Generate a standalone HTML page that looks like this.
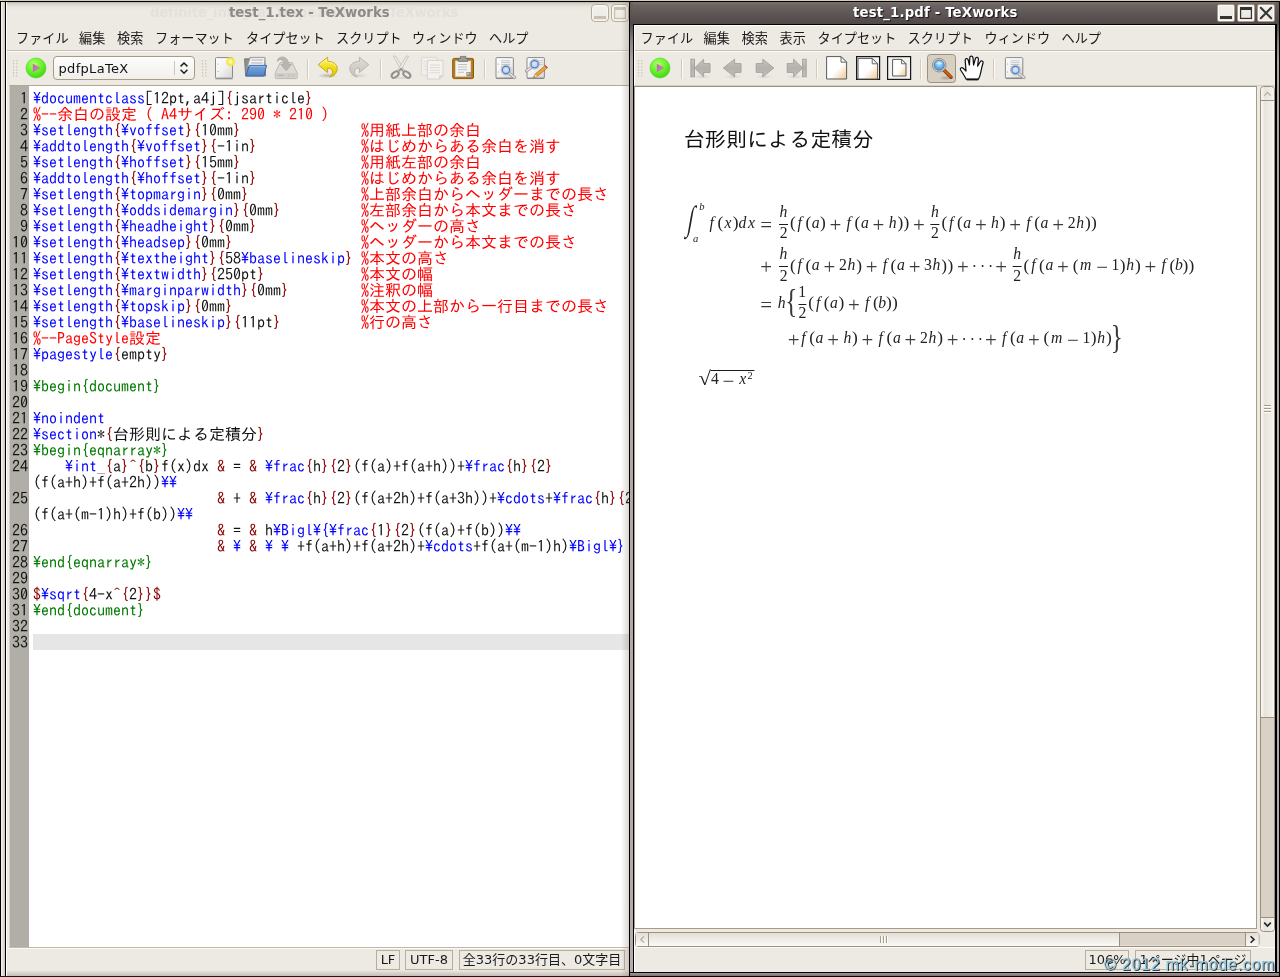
<!DOCTYPE html>
<html lang="ja"><head><meta charset="utf-8"><title>TeXworks</title>
<style>
*{box-sizing:border-box;margin:0;padding:0}
html,body{width:1280px;height:977px;overflow:hidden;background:#000}
body{position:relative;font-family:"DejaVu Sans","Noto Sans CJK JP",sans-serif;font-size:13px;color:#1a1a1a}
i{font-style:normal}
.abs,.win *{position:absolute}
.win{will-change:transform;position:absolute;top:0;height:977px;overflow:hidden}
#topstrip{position:absolute;left:0;top:0;width:1280px;height:1px;background:#d9cdb8;z-index:50}
/* ---------- left window ---------- */
#L{left:0;width:629px;background:#ede9e3}
#L .fl{left:0;top:1px;width:6px;height:976px;background:linear-gradient(90deg,#000 0,#000 1px,#f4f2ee 1px,#e2ded8 3px,#c9c4bd 5px,#000 5px,#000 6px)}
#L .tl{left:0;top:1px;width:629px;height:1px;background:#000}
#L .hl{left:6px;top:2px;width:1px;height:975px;background:#fff}
#L .tgrad{left:7px;top:2px;width:622px;height:8px;background:linear-gradient(180deg,#b9b5af 0,#d9d5cf 2px,#e8e5df 5px,#ede9e3 8px)}
#L .rshadow{left:621px;top:2px;width:8px;height:975px;background:linear-gradient(90deg,rgba(120,110,100,0) 0,rgba(120,110,100,.28) 100%)}
#L .bgrad{left:7px;top:970px;width:622px;height:6px;background:linear-gradient(180deg,rgba(200,195,188,0) 0,rgba(190,185,178,.9) 100%)}
#L .bl{left:0;top:976px;width:629px;height:1px;background:#1a1a1a}
.title{top:2px;height:22px;line-height:22px;font-weight:bold;font-size:13.3px;white-space:nowrap}
#L .title.ghost{left:150px;color:#e4e0da;letter-spacing:-.21px}
#L .title.real{left:229px;color:#8d8986}
.wb{width:18px;height:18px;top:4px;border-radius:4px}
#L .wb{border:1px solid #b9ad9a;background:linear-gradient(180deg,#f3f1ed,#ece9e3);box-shadow:inset 0 0 0 1px #f8f7f4;border-radius:4px}
.menu{top:26px;height:25px;line-height:25px;white-space:nowrap;font-size:13.15px;color:#1a1a1a}
.menu span{position:absolute;top:0}
.sep1{height:1px;background:#c9bfb1}
.sep2{height:1px;background:#fbfaf8}
.grip{width:6px;height:18px;top:60px;background-image:radial-gradient(circle at 1px 1px,#b9a892 0,#b9a892 .8px,rgba(0,0,0,0) 1.1px);background-size:3px 3px}
.vsep{top:59px;width:2px;height:20px;background:linear-gradient(90deg,#cfc6b8 0,#cfc6b8 1px,#faf9f6 1px)}
.ico{overflow:visible}
svg{position:absolute;overflow:visible}
#combo{left:53px;top:56px;width:142px;height:24px;border:1px solid #a99c86;border-radius:4px;background:linear-gradient(180deg,#fdfdfc,#f1efea);box-shadow:inset 0 1px 0 #fff}
#combo .t{left:4.5px;top:.5px;line-height:22px;font-size:13px;letter-spacing:.32px;color:#111}
#combo .d{left:120px;top:4px;width:1px;height:14px;background:#cfc6b8}
/* editor */
#ed{left:9px;top:85px;width:620px;height:863px;background:#fff;border-top:1px solid #b5a892;border-left:1px solid #d8d2c8;border-bottom:1px solid #c4b7a3;overflow:hidden}
#gut{left:0;top:0;width:19px;height:862px;background:#b1aea8}
#nums{left:-9px;top:4px;width:27px;text-align:right}
#nums div,#rows div{position:static;height:16px;line-height:16px;white-space:pre}
#nums,#rows{font-family:"IPAGothic","Liberation Mono",monospace;font-size:16px;color:#111}
#rows{left:23px;top:4px;width:700px}
#rows div.cur{background:#e6e6e6;margin-left:0}
#rows i{position:static}
i.c{color:#ff0000}i.e{color:#007800}i.b{color:#0000ff}i.r{color:#8b0000}
.sbox{top:950px;height:20px;line-height:18px;border:1px solid #b9ad9a;font-size:13px;text-align:center;white-space:nowrap;color:#1a1a1a}
/* ---------- right window ---------- */
#R{left:629px;width:651px;background:#ede9e3}
#R .tl{left:0;top:1px;width:651px;height:1px;background:#000}
#R .fl{left:0;top:2px;width:4px;height:975px;background:linear-gradient(90deg,#000 0,#000 1px,rgba(0,0,0,0) 1px),linear-gradient(180deg,#6b6361 0,#514a48 22px,#8a8381 40px,#aca5a3 60px,#b3acaa 100%)}
#R .fli{left:4px;top:24px;width:1px;height:949px;background:#000}
#R .fr{left:647px;top:2px;width:4px;height:975px;background:linear-gradient(90deg,rgba(0,0,0,0) 0,rgba(0,0,0,0) 3px,#000 3px),linear-gradient(180deg,#6b6361 0,#514a48 22px,#8a8381 40px,#aca5a3 60px,#b3acaa 100%)}
#R .fri{left:646px;top:24px;width:1.5px;height:949px;background:#000}
#R .tb{left:1px;top:2px;width:649px;height:22px;background:linear-gradient(180deg,#7a7270 0,#6c6462 3px,#5e5654 12px,#4f4846 22px)}
#R .tbl{left:4px;top:24px;width:643px;height:1px;background:#000}
#R .hl{left:5px;top:25px;width:1px;height:947px;background:#fff}
#R .hl2{left:5px;top:25px;width:641px;height:1px;background:#fff}
#R .bb{left:1px;top:972px;width:649px;height:5px;background:linear-gradient(180deg,#000 0,#000 1.3px,#9a9391 1.3px,#7b7472 4px,#000 4px)}
#R .title{left:224px;letter-spacing:.15px;color:#fff;text-shadow:1px 1px 1px rgba(0,0,0,.8);}
#R .wb{border:1px solid #a89a86;background:linear-gradient(180deg,#f2efeb,#ebe7e1);box-shadow:inset 0 0 0 1px #fbfaf8;border-radius:2px}
#pv{left:5px;top:86px;width:623px;height:843px;background:#fff;border:1px solid #a99c86;border-top-color:#9b8f7c;overflow:hidden}
#pv *{white-space:nowrap}
.sb{background:linear-gradient(90deg,#fbfaf8,#e7e3dc 35%,#f1eeea 80%,#faf9f7);border:1px solid #9c907d}
#wm{left:475px;top:954.5px;font-family:"Liberation Sans",sans-serif;font-size:16px;line-height:20px;letter-spacing:.75px;color:#93c9e0;text-shadow:1px 1px 0 rgba(30,45,55,.9),1px 0 0 rgba(39,54,63,.35);white-space:nowrap;z-index:20}

</style></head>
<body>
<div id="L" class="win">
 <div class="tgrad"></div>
 <div class="title ghost">definite_integral_trapezoid.tex - TeXworks</div>
 <div class="title real">test_1.tex - TeXworks</div>
 <div class="wb" style="left:591px"><svg width="18" height="18" viewBox="0 0 18 18" style="left:-1px;top:-1px"><rect x="3" y="12" width="12" height="3" fill="#cbc1b1"/></svg></div>
 <div class="wb" style="left:611px"><svg width="18" height="18" viewBox="0 0 18 18" style="left:-1px;top:-1px"><rect x="3.6" y="3.6" width="10.8" height="10.8" fill="none" stroke="#cbc1b1" stroke-width="1.2"/><rect x="3" y="3" width="12" height="3" fill="#cbc1b1"/></svg></div>
 <div class="menu" style="left:-1px;width:629px">
  <span style="left:17px">ファイル</span><span style="left:80px">編集</span><span style="left:118px">検索</span><span style="left:156px">フォーマット</span><span style="left:247px">タイプセット</span><span style="left:337px">スクリプト</span><span style="left:413px">ウィンドウ</span><span style="left:490px">ヘルプ</span>
 </div>
 <div class="sep1" style="left:7px;top:50px;width:622px"></div>
 <div class="sep2" style="left:7px;top:51px;width:622px"></div>
 
 <div id="combo"><div class="t">pdfpLaTeX</div><div class="d"></div><svg width="12" height="16" viewBox="0 0 12 16" style="left:124px;top:3px"><path d="M2.6 6.4 L6 3 L9.400 6.4 M2.6 9.800 L6 13.2 L9.400 9.800" fill="none" stroke="#1c1c1c" stroke-width="1.5"/></svg></div>
 <svg width="629" height="34" viewBox="0 52 629 34" style="left:0;top:52px"><defs>
<radialGradient id="gp" cx=".4" cy=".3" r=".75"><stop offset="0" stop-color="#aaff6a"/><stop offset=".55" stop-color="#66f22c"/><stop offset="1" stop-color="#3ed012"/></radialGradient>
<linearGradient id="gtri" x1="0" y1="0" x2="1" y2="1"><stop offset="0" stop-color="#b868a0"/><stop offset="1" stop-color="#d090b8"/></linearGradient>
<linearGradient id="gpage" x1="0" y1="0" x2="1" y2="1"><stop offset="0" stop-color="#ffffff"/><stop offset=".5" stop-color="#f2f2f2"/><stop offset="1" stop-color="#d4d4d4"/></linearGradient>
<radialGradient id="gglow"><stop offset="0" stop-color="#fffff4"/><stop offset=".28" stop-color="#fbf47a"/><stop offset=".7" stop-color="#f3e636" stop-opacity=".9"/><stop offset="1" stop-color="#f3e636" stop-opacity="0"/></radialGradient>
<linearGradient id="gblue" x1="0" y1="0" x2="0" y2="1"><stop offset="0" stop-color="#7aa7dc"/><stop offset="1" stop-color="#4f82c4"/></linearGradient>
<linearGradient id="gyel" x1="0" y1="0" x2="0" y2="1"><stop offset="0" stop-color="#fdf27a"/><stop offset=".5" stop-color="#f3dc1c"/><stop offset="1" stop-color="#e0c000"/></linearGradient>
<linearGradient id="ggray" x1="0" y1="0" x2="0" y2="1"><stop offset="0" stop-color="#dedcd8"/><stop offset="1" stop-color="#c6c3be"/></linearGradient>
<linearGradient id="gnav" x1="0" y1="0" x2="0" y2="1"><stop offset="0" stop-color="#c9c6c1"/><stop offset=".5" stop-color="#b4b1ac"/><stop offset="1" stop-color="#c2bfba"/></linearGradient>
<linearGradient id="gdoc" x1="0" y1="0" x2="1" y2="1"><stop offset="0" stop-color="#ffffff"/><stop offset=".55" stop-color="#ffffff"/><stop offset="1" stop-color="#f1c58f"/></linearGradient>
<radialGradient id="glens" cx=".5" cy=".35" r=".7"><stop offset="0" stop-color="#d8ecfb"/><stop offset=".5" stop-color="#6db6ee"/><stop offset="1" stop-color="#3c8fdc"/></radialGradient>
<radialGradient id="glens2" cx=".5" cy=".4" r=".7"><stop offset="0" stop-color="#e4ecf6"/><stop offset="1" stop-color="#a9c2e6"/></radialGradient>
<radialGradient id="gshadow"><stop offset="0" stop-color="#000" stop-opacity=".22"/><stop offset="1" stop-color="#000" stop-opacity="0"/></radialGradient>
</defs><rect x="13" y="60.3" width="1.1" height="1.1" fill="#c2b29b"/><rect x="16.2" y="60.3" width="1.1" height="1.1" fill="#c2b29b"/><rect x="13" y="63.3" width="1.1" height="1.1" fill="#c2b29b"/><rect x="16.2" y="63.3" width="1.1" height="1.1" fill="#c2b29b"/><rect x="13" y="66.3" width="1.1" height="1.1" fill="#c2b29b"/><rect x="16.2" y="66.3" width="1.1" height="1.1" fill="#c2b29b"/><rect x="13" y="69.3" width="1.1" height="1.1" fill="#c2b29b"/><rect x="16.2" y="69.3" width="1.1" height="1.1" fill="#c2b29b"/><rect x="13" y="72.3" width="1.1" height="1.1" fill="#c2b29b"/><rect x="16.2" y="72.3" width="1.1" height="1.1" fill="#c2b29b"/><rect x="13" y="75.3" width="1.1" height="1.1" fill="#c2b29b"/><rect x="16.2" y="75.3" width="1.1" height="1.1" fill="#c2b29b"/><circle cx="36" cy="68" r="10" fill="url(#gp)" stroke="#4cd818" stroke-width=".6"/><path d="M32.8 63.7 L32.8 72.3 L40.8 68 Z" fill="url(#gtri)"/><rect x="202" y="60.3" width="1.1" height="1.1" fill="#c2b29b"/><rect x="205.2" y="60.3" width="1.1" height="1.1" fill="#c2b29b"/><rect x="202" y="63.3" width="1.1" height="1.1" fill="#c2b29b"/><rect x="205.2" y="63.3" width="1.1" height="1.1" fill="#c2b29b"/><rect x="202" y="66.3" width="1.1" height="1.1" fill="#c2b29b"/><rect x="205.2" y="66.3" width="1.1" height="1.1" fill="#c2b29b"/><rect x="202" y="69.3" width="1.1" height="1.1" fill="#c2b29b"/><rect x="205.2" y="69.3" width="1.1" height="1.1" fill="#c2b29b"/><rect x="202" y="72.3" width="1.1" height="1.1" fill="#c2b29b"/><rect x="205.2" y="72.3" width="1.1" height="1.1" fill="#c2b29b"/><rect x="202" y="75.3" width="1.1" height="1.1" fill="#c2b29b"/><rect x="205.2" y="75.3" width="1.1" height="1.1" fill="#c2b29b"/><rect x="215.5" y="57.6" width="17" height="20.6" rx="1" fill="url(#gpage)" stroke="#8a8a8a"/><rect x="215" y="78.4" width="18" height="1.2" fill="#000" opacity=".2"/><circle cx="218" cy="64" r=".6" fill="#999"/><circle cx="218" cy="71.5" r=".6" fill="#999"/><circle cx="230.6" cy="61.8" r="5.3" fill="url(#gglow)"/><path d="M244.5 58.8 L250 58.8 L250 57.4 L264.8 57.4 L265.6 76 L245.6 76 Z" fill="#8f8f8d" stroke="#6f6f6d" stroke-width=".8"/><path d="M250.3 57.6 L265 57.6 L264 67 L247.5 67 C248.5 63 249.6 60 250.3 57.6Z" fill="#f4f4f4" stroke="#9a9a9a" stroke-width=".7"/><rect x="251.5" y="59.3" width="11.5" height="1.4" fill="#c4c4c4"/><rect x="251" y="62.3" width="11.5" height="1.4" fill="#c4c4c4"/><path d="M249.3 65.4 L266.6 65.4 L263.8 76 L245.8 76 Z" fill="url(#gblue)" stroke="#3867aa" stroke-width="1" stroke-linejoin="round"/><path d="M250 66.4 L265.4 66.4" stroke="#9fc0ea" stroke-width=".8"/><path d="M280.2 62.6 L292.2 62.6 L297.2 73 L297.2 77.6 Q297.2 78.6 296.2 78.6 L276.2 78.6 Q275.2 78.6 275.2 77.6 L275.2 73 Z" fill="#dedbd6" stroke="#bcb9b4" stroke-width="1"/><rect x="276.2" y="73" width="20" height="4.8" fill="#d1cec9"/><rect x="277.5" y="74.5" width="6" height="1.6" fill="#bab7b2"/><rect x="288" y="74" width="1" height="3" fill="#c4c1bc"/><rect x="290.5" y="74" width="1" height="3" fill="#c4c1bc"/><rect x="293" y="74" width="1" height="3" fill="#c4c1bc"/><path d="M277.2 61.5 C277.5 56.5 284 55.5 286.8 59 C288 60.5 288.3 62 288.3 64.3 L291.6 64.3 L286.2 70.8 L280.8 64.3 L284 64.3 C284 61.5 282.5 59.5 280.3 59.7 C278.6 59.9 277.6 60.6 277.2 61.5Z" fill="#b9b6b1" stroke="#a9a6a1" stroke-width=".7"/><rect x="307" y="59" width="1" height="20" fill="#d3cabd"/><rect x="308" y="59" width="1" height="20" fill="#fbfaf8"/><ellipse cx="327.5" cy="75.6" rx="10" ry="2.6" fill="url(#gshadow)"/><path d="M318.2 64.7 L327.6 57.2 L327.6 61.4 C333.5 61.2 337.2 64.4 337.2 68.6 C337.2 72.6 334.4 75.8 329.6 77 C332.2 75 333 72.8 332.4 70.8 C331.8 68.8 330 68 327.6 68.2 L327.6 72.6 Z" fill="url(#gyel)" stroke="#c4a400" stroke-width=".9" stroke-linejoin="round"/><path d="M320 64.7 L326.8 59.3 L326.8 62.4 C331 62.2 334.6 63.8 335.8 66.6" fill="none" stroke="#fff9b0" stroke-width=".9" opacity=".9"/><ellipse cx="358.5" cy="75.6" rx="10" ry="2.4" fill="url(#gshadow)" opacity=".5"/><path d="M367.8 64.7 L358.4 57.2 L358.4 61.4 C352.5 61.2 348.8 64.4 348.8 68.6 C348.8 72.6 351.6 75.8 356.4 77 C353.8 75 353 72.8 353.6 70.8 C354.2 68.8 356 68 358.4 68.2 L358.4 72.6 Z" transform="translate(1,0)" fill="url(#ggray)" stroke="#b3b0ab" stroke-width=".9" stroke-linejoin="round"/><rect x="380" y="59" width="1" height="20" fill="#d3cabd"/><rect x="381" y="59" width="1" height="20" fill="#fbfaf8"/><ellipse cx="401" cy="78" rx="9" ry="1.6" fill="url(#gshadow)" opacity=".5"/><path d="M393.4 56.2 L395.6 56 L404.6 70.5 L402 71.6 Z" fill="#efede9" stroke="#b9b6b1" stroke-width=".7"/><path d="M408.6 56.2 L406.4 56 L397.4 70.5 L400 71.6 Z" fill="#efede9" stroke="#b9b6b1" stroke-width=".7"/><ellipse cx="395.2" cy="74.6" rx="4" ry="2.5" transform="rotate(-38 395.2 74.6)" fill="none" stroke="#93918d" stroke-width="2"/><ellipse cx="406.8" cy="74.6" rx="4" ry="2.5" transform="rotate(38 406.8 74.6)" fill="none" stroke="#93918d" stroke-width="2"/><path d="M399 70.8 L401 68.6 L403 70.8" fill="none" stroke="#93918d" stroke-width="1.6"/><rect x="421.4" y="57.4" width="15.6" height="18" rx=".8" fill="#f1efeb" stroke="#dad6d0" stroke-width=".9"/><rect x="423.5" y="61" width="5" height=".8" fill="#e0dcd6"/><rect x="423.5" y="63.6" width="5" height=".8" fill="#e0dcd6"/><rect x="423.5" y="66.2" width="5" height=".8" fill="#e0dcd6"/><rect x="423.5" y="68.8" width="5" height=".8" fill="#e0dcd6"/><path d="M427.4 60.4 L443 60.4 L443 75.6 L439.6 79 L427.4 79 Z" fill="#f4f2ee" stroke="#d4d0ca" stroke-width=".9"/><rect x="430" y="64.6" width="10" height=".8" fill="#d9d5cf"/><rect x="430" y="67.2" width="10" height=".8" fill="#d9d5cf"/><rect x="430" y="69.8" width="10" height=".8" fill="#d9d5cf"/><rect x="430" y="72.4" width="10" height=".8" fill="#d9d5cf"/><path d="M439.6 79 L439.6 75.6 L443 75.6 Z" fill="#e4e1dc" stroke="#d0ccc6" stroke-width=".7"/><rect x="452.7" y="58.4" width="20.8" height="20.2" rx="1.6" fill="#b47a22" stroke="#8f5902" stroke-width="1"/><rect x="455.4" y="61" width="15.4" height="15.4" fill="#f3f3f1" stroke="#d8d8d4" stroke-width=".6"/><rect x="458" y="64" width="9" height=".9" fill="#bcbcb8"/><rect x="458" y="66.6" width="9" height=".9" fill="#bcbcb8"/><rect x="458" y="69.2" width="9" height=".9" fill="#bcbcb8"/><rect x="458" y="71.8" width="6" height=".9" fill="#bcbcb8"/><path d="M466.4 72 L470.8 72 L470.8 76.4 L466.4 76.4Z" fill="#888a85"/><path d="M467.2 72.8 L470 72.8 L467.2 75.6Z" fill="#d3d7cf"/><path d="M458.4 61.4 L458.4 58.4 L460.4 58.4 L460.4 56.4 L465.8 56.4 L465.8 58.4 L467.8 58.4 L467.8 61.4 Z" fill="#9a9c96" stroke="#6c6e68" stroke-width=".8"/><rect x="484" y="59" width="1" height="20" fill="#d3cabd"/><rect x="485" y="59" width="1" height="20" fill="#fbfaf8"/><rect x="496" y="57.6" width="17.4" height="20.6" rx="1" fill="url(#gpage)" stroke="#8b8b8b" stroke-width="1"/><rect x="496" y="77.6" width="17.4" height="1.5" fill="#000" opacity=".18"/><rect x="501" y="60.4" width="9" height=".8" fill="#bdbdbd"/><rect x="501" y="62.3" width="9" height=".8" fill="#bdbdbd"/><rect x="501" y="64.2" width="9" height=".8" fill="#bdbdbd"/><rect x="501" y="66.1" width="9" height=".8" fill="#bdbdbd"/><circle cx="498.2" cy="64" r=".6" fill="#999"/><circle cx="498.2" cy="72" r=".6" fill="#999"/><path d="M509.5 73.5 L514.6 77.6" stroke="#9a9a9a" stroke-width="3.2" stroke-linecap="round"/><path d="M509.8 73.6 L514.6 77.5" stroke="#e6e6e6" stroke-width="1.6" stroke-linecap="round"/><circle cx="506" cy="70" r="4.9" fill="#dcdcdc" stroke="#b0b0b0" stroke-width=".8"/><circle cx="506" cy="70" r="3.6" fill="url(#glens2)" stroke="#4a7fd0" stroke-width="1.1"/><rect x="527" y="57.6" width="17.4" height="20.6" rx="1" fill="url(#gpage)" stroke="#8b8b8b"/><rect x="527" y="77.6" width="17.4" height="1.5" fill="#000" opacity=".18"/><rect x="538" y="60" width="5" height=".8" fill="#c4c4c4"/><rect x="538" y="62" width="5" height=".8" fill="#c4c4c4"/><rect x="538" y="64" width="5" height=".8" fill="#c4c4c4"/><path d="M531 67.6 L526.4 71" stroke="#a0a0a0" stroke-width="3.2" stroke-linecap="round"/><path d="M531 67.5 L526.6 70.8" stroke="#e8e8e8" stroke-width="1.5" stroke-linecap="round"/><circle cx="534.6" cy="64.2" r="4.9" fill="#dcdcdc" stroke="#b0b0b0" stroke-width=".8"/><circle cx="534.6" cy="64.2" r="3.6" fill="url(#glens2)" stroke="#4a7fd0" stroke-width="1.1"/><path d="M545.4 65.4 L547.6 67.6 L537.2 76.4 L533.6 77.6 L535 74.2 Z" fill="#eaa63a" stroke="#a86a10" stroke-width=".7" stroke-linejoin="round"/><path d="M544.2 66.4 L546.4 68.6" stroke="#c8c8c8" stroke-width="1"/><path d="M545.4 65.4 L547.6 67.6 L546.6 68.5 L544.4 66.3Z" fill="#e83838"/><path d="M533.6 77.6 L535 74.2 L537.2 76.4Z" fill="#f2d9a8"/><path d="M533.6 77.6 L534.2 76.2 L535 77.1Z" fill="#333"/></svg>
 <div id="ed">
  <div id="gut"></div>
  <div id="nums"><div>1</div><div>2</div><div>3</div><div>4</div><div>5</div><div>6</div><div>7</div><div>8</div><div>9</div><div>10</div><div>11</div><div>12</div><div>13</div><div>14</div><div>15</div><div>16</div><div>17</div><div>18</div><div>19</div><div>20</div><div>21</div><div>22</div><div>23</div><div>24</div><div>&nbsp;</div><div>25</div><div>&nbsp;</div><div>26</div><div>27</div><div>28</div><div>29</div><div>30</div><div>31</div><div>32</div><div>33</div></div>
  <div id="rows"><div><i class="b">\documentclass</i>[12pt,a4j]<i class="r">{</i>jsarticle<i class="r">}</i></div><div><i class="c">%--余白の設定 ( A4サイズ: 290 * 210 )</i></div><div><i class="b">\setlength</i><i class="r">{</i><i class="b">\voffset</i><i class="r">}</i><i class="r">{</i>10mm<i class="r">}</i>               <i class="c">%用紙上部の余白</i></div><div><i class="b">\addtolength</i><i class="r">{</i><i class="b">\voffset</i><i class="r">}</i><i class="r">{</i>-1in<i class="r">}</i>             <i class="c">%はじめからある余白を消す</i></div><div><i class="b">\setlength</i><i class="r">{</i><i class="b">\hoffset</i><i class="r">}</i><i class="r">{</i>15mm<i class="r">}</i>               <i class="c">%用紙左部の余白</i></div><div><i class="b">\addtolength</i><i class="r">{</i><i class="b">\hoffset</i><i class="r">}</i><i class="r">{</i>-1in<i class="r">}</i>             <i class="c">%はじめからある余白を消す</i></div><div><i class="b">\setlength</i><i class="r">{</i><i class="b">\topmargin</i><i class="r">}</i><i class="r">{</i>0mm<i class="r">}</i>              <i class="c">%上部余白からヘッダーまでの長さ</i></div><div><i class="b">\setlength</i><i class="r">{</i><i class="b">\oddsidemargin</i><i class="r">}</i><i class="r">{</i>0mm<i class="r">}</i>          <i class="c">%左部余白から本文までの長さ</i></div><div><i class="b">\setlength</i><i class="r">{</i><i class="b">\headheight</i><i class="r">}</i><i class="r">{</i>0mm<i class="r">}</i>             <i class="c">%ヘッダーの高さ</i></div><div><i class="b">\setlength</i><i class="r">{</i><i class="b">\headsep</i><i class="r">}</i><i class="r">{</i>0mm<i class="r">}</i>                <i class="c">%ヘッダーから本文までの長さ</i></div><div><i class="b">\setlength</i><i class="r">{</i><i class="b">\textheight</i><i class="r">}</i><i class="r">{</i>58<i class="b">\baselineskip</i><i class="r">}</i> <i class="c">%本文の高さ</i></div><div><i class="b">\setlength</i><i class="r">{</i><i class="b">\textwidth</i><i class="r">}</i><i class="r">{</i>250pt<i class="r">}</i>            <i class="c">%本文の幅</i></div><div><i class="b">\setlength</i><i class="r">{</i><i class="b">\marginparwidth</i><i class="r">}</i><i class="r">{</i>0mm<i class="r">}</i>         <i class="c">%注釈の幅</i></div><div><i class="b">\setlength</i><i class="r">{</i><i class="b">\topskip</i><i class="r">}</i><i class="r">{</i>0mm<i class="r">}</i>                <i class="c">%本文の上部から一行目までの長さ</i></div><div><i class="b">\setlength</i><i class="r">{</i><i class="b">\baselineskip</i><i class="r">}</i><i class="r">{</i>11pt<i class="r">}</i>          <i class="c">%行の高さ</i></div><div><i class="c">%--PageStyle設定</i></div><div><i class="b">\pagestyle</i><i class="r">{</i>empty<i class="r">}</i></div><div>&nbsp;</div><div><i class="e">\begin{document}</i></div><div>&nbsp;</div><div><i class="b">\noindent</i></div><div><i class="b">\section</i>*<i class="r">{</i>台形則による定積分<i class="r">}</i></div><div><i class="e">\begin{eqnarray*}</i></div><div>    <i class="b">\int</i><i class="r">_</i><i class="r">{</i>a<i class="r">}</i><i class="r">^</i><i class="r">{</i>b<i class="r">}</i>f(x)dx <i class="r">&amp;</i> = <i class="r">&amp;</i> <i class="b">\frac</i><i class="r">{</i>h<i class="r">}</i><i class="r">{</i>2<i class="r">}</i>(f(a)+f(a+h))+<i class="b">\frac</i><i class="r">{</i>h<i class="r">}</i><i class="r">{</i>2<i class="r">}</i></div><div>(f(a+h)+f(a+2h))<i class="b">\\</i></div><div>                       <i class="r">&amp;</i> + <i class="r">&amp;</i> <i class="b">\frac</i><i class="r">{</i>h<i class="r">}</i><i class="r">{</i>2<i class="r">}</i>(f(a+2h)+f(a+3h))+<i class="b">\cdots</i>+<i class="b">\frac</i><i class="r">{</i>h<i class="r">}</i><i class="r">{</i>2<i class="r">}</i></div><div>(f(a+(m-1)h)+f(b))<i class="b">\\</i></div><div>                       <i class="r">&amp;</i> = <i class="r">&amp;</i> h<i class="b">\Bigl</i><i class="b">\{</i><i class="b">\frac</i><i class="r">{</i>1<i class="r">}</i><i class="r">{</i>2<i class="r">}</i>(f(a)+f(b))<i class="b">\\</i></div><div>                       <i class="r">&amp;</i> <i class="b">\ </i><i class="r">&amp;</i> <i class="b">\ </i><i class="b">\ </i>+f(a+h)+f(a+2h)+<i class="b">\cdots</i>+f(a+(m-1)h)<i class="b">\Bigl</i><i class="b">\}</i></div><div><i class="e">\end{eqnarray*}</i></div><div>&nbsp;</div><div><i class="r">$</i><i class="b">\sqrt</i><i class="r">{</i>4-x<i class="r">^</i><i class="r">{</i>2<i class="r">}</i><i class="r">}</i><i class="r">$</i></div><div><i class="e">\end{document}</i></div><div>&nbsp;</div><div class="cur">&nbsp;</div></div>
 </div>
 <div class="sep2" style="left:7px;top:948px;width:622px"></div>
 <div class="sbox" style="left:376px;width:24px">LF</div>
 <div class="sbox" style="left:405px;width:48px">UTF-8</div>
 <div class="sbox" style="left:459px;width:166px">全33行の33行目、0文字目</div>
 <div class="bgrad"></div>
 <div class="rshadow"></div>
 <div class="fl"></div><div class="hl"></div><div class="tl"></div><div class="bl"></div>
</div>
<div id="R" class="win">
 <div class="tb"></div>
 <div class="title">test_1.pdf - TeXworks</div>
 <div class="wb" style="left:588px"><svg width="18" height="18" viewBox="0 0 18 18" style="left:-1px;top:-1px"><rect x="3" y="12" width="12" height="3" fill="#333"/></svg></div>
 <div class="wb" style="left:608px"><svg width="18" height="18" viewBox="0 0 18 18" style="left:-1px;top:-1px"><rect x="3.6" y="3.6" width="10.8" height="10.8" fill="none" stroke="#333" stroke-width="1.2"/><rect x="3" y="3" width="12" height="3" fill="#333"/></svg></div>
 <div class="wb" style="left:628px"><svg width="18" height="18" viewBox="0 0 18 18" style="left:-1px;top:-1px"><path d="M3.8 3.8 L14.2 14.2 M14.2 3.8 L3.8 14.2" stroke="#333" stroke-width="2" stroke-linecap="round"/></svg></div>
 <div class="tbl"></div><div class="hl2"></div>
 <div class="menu" style="left:-.5px;width:651px">
  <span style="left:12px">ファイル</span><span style="left:75px">編集</span><span style="left:113px">検索</span><span style="left:151px">表示</span><span style="left:189px">タイプセット</span><span style="left:279px">スクリプト</span><span style="left:356px">ウィンドウ</span><span style="left:433px">ヘルプ</span>
 </div>
 <div class="sep1" style="left:5px;top:50px;width:641px"></div>
 <div class="sep2" style="left:5px;top:51px;width:641px"></div>
 
 <svg width="651" height="34" viewBox="629 52 651 34" style="left:0;top:52px"><defs>
<radialGradient id="r_gp" cx=".4" cy=".3" r=".75"><stop offset="0" stop-color="#aaff6a"/><stop offset=".55" stop-color="#66f22c"/><stop offset="1" stop-color="#3ed012"/></radialGradient>
<linearGradient id="r_gtri" x1="0" y1="0" x2="1" y2="1"><stop offset="0" stop-color="#b868a0"/><stop offset="1" stop-color="#d090b8"/></linearGradient>
<linearGradient id="r_gpage" x1="0" y1="0" x2="1" y2="1"><stop offset="0" stop-color="#ffffff"/><stop offset=".5" stop-color="#f2f2f2"/><stop offset="1" stop-color="#d4d4d4"/></linearGradient>
<radialGradient id="r_gglow"><stop offset="0" stop-color="#fffff4"/><stop offset=".28" stop-color="#fbf47a"/><stop offset=".7" stop-color="#f3e636" stop-opacity=".9"/><stop offset="1" stop-color="#f3e636" stop-opacity="0"/></radialGradient>
<linearGradient id="r_gblue" x1="0" y1="0" x2="0" y2="1"><stop offset="0" stop-color="#7aa7dc"/><stop offset="1" stop-color="#4f82c4"/></linearGradient>
<linearGradient id="r_gyel" x1="0" y1="0" x2="0" y2="1"><stop offset="0" stop-color="#fdf27a"/><stop offset=".5" stop-color="#f3dc1c"/><stop offset="1" stop-color="#e0c000"/></linearGradient>
<linearGradient id="r_ggray" x1="0" y1="0" x2="0" y2="1"><stop offset="0" stop-color="#dedcd8"/><stop offset="1" stop-color="#c6c3be"/></linearGradient>
<linearGradient id="r_gnav" x1="0" y1="0" x2="0" y2="1"><stop offset="0" stop-color="#c9c6c1"/><stop offset=".5" stop-color="#b4b1ac"/><stop offset="1" stop-color="#c2bfba"/></linearGradient>
<linearGradient id="r_gdoc" x1="0" y1="0" x2="1" y2="1"><stop offset="0" stop-color="#ffffff"/><stop offset=".55" stop-color="#ffffff"/><stop offset="1" stop-color="#f1c58f"/></linearGradient>
<radialGradient id="r_glens" cx=".5" cy=".35" r=".7"><stop offset="0" stop-color="#d8ecfb"/><stop offset=".5" stop-color="#6db6ee"/><stop offset="1" stop-color="#3c8fdc"/></radialGradient>
<radialGradient id="r_glens2" cx=".5" cy=".4" r=".7"><stop offset="0" stop-color="#e4ecf6"/><stop offset="1" stop-color="#a9c2e6"/></radialGradient>
<radialGradient id="r_gshadow"><stop offset="0" stop-color="#000" stop-opacity=".22"/><stop offset="1" stop-color="#000" stop-opacity="0"/></radialGradient>
</defs><rect x="638" y="60.3" width="1.1" height="1.1" fill="#c2b29b"/><rect x="641.2" y="60.3" width="1.1" height="1.1" fill="#c2b29b"/><rect x="638" y="63.3" width="1.1" height="1.1" fill="#c2b29b"/><rect x="641.2" y="63.3" width="1.1" height="1.1" fill="#c2b29b"/><rect x="638" y="66.3" width="1.1" height="1.1" fill="#c2b29b"/><rect x="641.2" y="66.3" width="1.1" height="1.1" fill="#c2b29b"/><rect x="638" y="69.3" width="1.1" height="1.1" fill="#c2b29b"/><rect x="641.2" y="69.3" width="1.1" height="1.1" fill="#c2b29b"/><rect x="638" y="72.3" width="1.1" height="1.1" fill="#c2b29b"/><rect x="641.2" y="72.3" width="1.1" height="1.1" fill="#c2b29b"/><rect x="638" y="75.3" width="1.1" height="1.1" fill="#c2b29b"/><rect x="641.2" y="75.3" width="1.1" height="1.1" fill="#c2b29b"/><circle cx="660" cy="68" r="10" fill="url(#r_gp)" stroke="#4cd818" stroke-width=".6"/><path d="M656.8 63.7 L656.8 72.3 L664.8 68 Z" fill="url(#r_gtri)"/><rect x="681" y="59" width="1" height="20" fill="#d3cabd"/><rect x="682" y="59" width="1" height="20" fill="#fbfaf8"/><ellipse cx="702" cy="76.8" rx="9" ry="2" fill="url(#r_gshadow)" opacity=".45"/><path d="M694.6 68 L703.6 59.2 L703.6 63.6 L710 63.6 L710 72.4 L703.6 72.4 L703.6 76.8 Z" fill="url(#r_gnav)" stroke="#a29f9a" stroke-width=".9" stroke-linejoin="round"/><rect x="690.9" y="59.2" width="3.6" height="17.6" fill="url(#r_gnav)" stroke="#a29f9a" stroke-width=".9"/><ellipse cx="733" cy="76.8" rx="9" ry="2" fill="url(#r_gshadow)" opacity=".45"/><path d="M723.4 68 L734.6 59.2 L734.6 63.6 L741 63.6 L741 72.4 L734.6 72.4 L734.6 76.8 Z" fill="url(#r_gnav)" stroke="#a29f9a" stroke-width=".9" stroke-linejoin="round"/><ellipse cx="764" cy="76.8" rx="9" ry="2" fill="url(#r_gshadow)" opacity=".45"/><path d="M773.8 68 L762.8 59.2 L762.8 63.6 L756.2 63.6 L756.2 72.4 L762.8 72.4 L762.8 76.8 Z" fill="url(#r_gnav)" stroke="#a29f9a" stroke-width=".9" stroke-linejoin="round"/><ellipse cx="795" cy="76.8" rx="9" ry="2" fill="url(#r_gshadow)" opacity=".45"/><path d="M802.6 68 L793.6 59.2 L793.6 63.6 L787.2 63.6 L787.2 72.4 L793.6 72.4 L793.6 76.8 Z" fill="url(#r_gnav)" stroke="#a29f9a" stroke-width=".9" stroke-linejoin="round"/><rect x="802.6" y="59.2" width="3.6" height="17.6" fill="url(#r_gnav)" stroke="#a29f9a" stroke-width=".9"/><rect x="816" y="59" width="1" height="20" fill="#d3cabd"/><rect x="817" y="59" width="1" height="20" fill="#fbfaf8"/><path d="M826.6 56.6 L841 56.6 L846.6 62.2 L846.6 79 L826.6 79 Z" fill="url(#r_gdoc)" stroke="#5a5a5a" stroke-width="1" stroke-linejoin="round"/><path d="M841 56.6 L841 62.2 L846.6 62.2 Z" fill="#f4f4f4" stroke="#5a5a5a" stroke-width=".9" stroke-linejoin="round"/><rect x="856.6" y="56.6" width="23" height="22.8" fill="#f4f2ee" stroke="#161616" stroke-width="1.2"/><path d="M858 58.4 L872.2 58.4 L877.6 63.8 L877.6 79 L858 79 Z" fill="url(#r_gdoc)" stroke="#5a5a5a" stroke-width="1" stroke-linejoin="round"/><path d="M872.2 58.4 L872.2 63.8 L877.6 63.8 Z" fill="#f4f4f4" stroke="#5a5a5a" stroke-width=".9" stroke-linejoin="round"/><rect x="887.6" y="56.6" width="23" height="22.8" fill="#f4f2ee" stroke="#161616" stroke-width="1.2"/><path d="M892.6 59.4 L901.6 59.4 L906 63.8 L906 76 L892.6 76 Z" fill="url(#r_gdoc)" stroke="#5a5a5a" stroke-width="1" stroke-linejoin="round"/><path d="M901.6 59.4 L901.6 63.8 L906 63.8 Z" fill="#f4f4f4" stroke="#5a5a5a" stroke-width=".9" stroke-linejoin="round"/><rect x="920" y="59" width="1" height="20" fill="#d3cabd"/><rect x="921" y="59" width="1" height="20" fill="#fbfaf8"/><rect x="927.5" y="54.5" width="28" height="28" rx="3" fill="#d8cfc3" stroke="#9d907d"/><ellipse cx="946" cy="78" rx="7" ry="2.6" fill="url(#r_gshadow)"/><path d="M944.4 70.6 L951 77.2" stroke="#8a3c06" stroke-width="3.6" stroke-linecap="round"/><path d="M944.6 70.6 L950.8 76.8" stroke="#cf6010" stroke-width="2" stroke-linecap="round"/><circle cx="939.2" cy="65.2" r="6.8" fill="#d0d0d0" stroke="#8a8a8a" stroke-width=".9"/><circle cx="939.2" cy="65.2" r="5.1" fill="url(#r_glens)" stroke="#5a6a7a" stroke-width=".7"/><path d="M935.6 64 Q939.2 60.6 942.8 64 Q939.2 62.6 935.6 64Z" fill="#fff" opacity=".8"/><path d="M966.2 79.2 C964.6 76 962.2 72.4 960.6 70 C959.6 68.2 961.6 66.8 963.2 68.2 L966 71 L965.2 60.4 C965 58.2 967.8 58 968.2 60 L969.4 65 L969.8 57.8 C969.8 55.6 972.8 55.6 973 57.8 L973.6 65 L975.4 58.6 C976 56.6 978.6 57.2 978.4 59.2 L977.6 66.2 L980.2 61.8 C981.2 60 983.6 61 983 63 C981.8 67 981.2 70 980.6 73 C980.2 75.6 979.4 77.4 978.4 79.2 Z" fill="#fff" stroke="#111" stroke-width="1.25" stroke-linejoin="round"/><path d="M966.8 79.6 L978.2 79.6" stroke="#111" stroke-width="1.6"/><rect x="993" y="59" width="1" height="20" fill="#d3cabd"/><rect x="994" y="59" width="1" height="20" fill="#fbfaf8"/><rect x="1005.4" y="57.6" width="17.4" height="20.6" rx="1" fill="url(#r_gpage)" stroke="#8b8b8b" stroke-width="1"/><rect x="1005.4" y="77.6" width="17.4" height="1.5" fill="#000" opacity=".18"/><rect x="1010.4" y="60.4" width="9" height=".8" fill="#bdbdbd"/><rect x="1010.4" y="62.3" width="9" height=".8" fill="#bdbdbd"/><rect x="1010.4" y="64.2" width="9" height=".8" fill="#bdbdbd"/><rect x="1010.4" y="66.1" width="9" height=".8" fill="#bdbdbd"/><circle cx="1007.6" cy="64" r=".6" fill="#999"/><circle cx="1007.6" cy="72" r=".6" fill="#999"/><path d="M1018.9 73.5 L1024 77.6" stroke="#9a9a9a" stroke-width="3.2" stroke-linecap="round"/><path d="M1019.2 73.6 L1024 77.5" stroke="#e6e6e6" stroke-width="1.6" stroke-linecap="round"/><circle cx="1015.4" cy="70" r="4.9" fill="#dcdcdc" stroke="#b0b0b0" stroke-width=".8"/><circle cx="1015.4" cy="70" r="3.6" fill="url(#r_glens2)" stroke="#4a7fd0" stroke-width="1.1"/></svg>
 <div class="hl"></div><div class="sep1" style="left:5px;top:85px;width:641px;background:#d6cec1"></div>
 <div id="pv"><svg width="621" height="842" viewBox="635 87 621 842" style="left:0;top:0"><g font-family="Liberation Serif,serif" font-size="15.7" fill="#222"><text><tspan x="709.5" y="228.0" font-style="italic">f</tspan><tspan x="717.5" y="228.2" font-size="17.3">(</tspan><tspan x="724.6" y="228.0" font-style="italic">x</tspan><tspan x="732.7" y="228.2" font-size="17.3">)</tspan><tspan x="738.5" y="228.0" font-style="italic">d</tspan><tspan x="747.9" y="228.0" font-style="italic">x</tspan><tspan x="760.3" y="231.7" font-size="20.9" fill="#3c3c3c">=</tspan><tspan x="779.6" y="216.9" font-style="italic">h</tspan><tspan x="779.7" y="238.3">2</tspan><tspan x="790.0" y="228.2" font-size="17.3">(</tspan><tspan x="797.6" y="228.0" font-style="italic">f</tspan><tspan x="805.5" y="228.2" font-size="17.3">(</tspan><tspan x="811.8" y="228.0" font-style="italic">a</tspan><tspan x="820.1" y="228.2" font-size="17.3">)</tspan><tspan x="829.6" y="231.7" font-size="20.9" fill="#3c3c3c">+</tspan><tspan x="846.6" y="228.0" font-style="italic">f</tspan><tspan x="854.5" y="228.2" font-size="17.3">(</tspan><tspan x="860.9" y="228.0" font-style="italic">a</tspan><tspan x="872.6" y="231.7" font-size="20.9" fill="#3c3c3c">+</tspan><tspan x="888.7" y="228.0" font-style="italic">h</tspan><tspan x="897.4" y="228.2" font-size="17.3">)</tspan><tspan x="903.5" y="228.2" font-size="17.3">)</tspan><tspan x="913.0" y="231.7" font-size="20.9" fill="#3c3c3c">+</tspan><tspan x="931.0" y="216.9" font-style="italic">h</tspan><tspan x="931.1" y="238.3">2</tspan><tspan x="941.4" y="228.2" font-size="17.3">(</tspan><tspan x="949.0" y="228.0" font-style="italic">f</tspan><tspan x="956.9" y="228.2" font-size="17.3">(</tspan><tspan x="963.2" y="228.0" font-style="italic">a</tspan><tspan x="974.9" y="231.7" font-size="20.9" fill="#3c3c3c">+</tspan><tspan x="991.0" y="228.0" font-style="italic">h</tspan><tspan x="999.7" y="228.2" font-size="17.3">)</tspan><tspan x="1009.2" y="231.7" font-size="20.9" fill="#3c3c3c">+</tspan><tspan x="1026.3" y="228.0" font-style="italic">f</tspan><tspan x="1034.2" y="228.2" font-size="17.3">(</tspan><tspan x="1040.5" y="228.0" font-style="italic">a</tspan><tspan x="1052.2" y="231.7" font-size="20.9" fill="#3c3c3c">+</tspan><tspan x="1067.8" y="228.0">2</tspan><tspan x="1076.2" y="228.0" font-style="italic">h</tspan><tspan x="1084.9" y="228.2" font-size="17.3">)</tspan><tspan x="1091.0" y="228.2" font-size="17.3">)</tspan><tspan x="699.2" y="209.7" font-style="italic" font-size="10.6">b</tspan><tspan x="692.9" y="241.9" font-style="italic" font-size="10.6">a</tspan><tspan x="760.3" y="274.0" font-size="20.9" fill="#3c3c3c">+</tspan><tspan x="779.6" y="259.2" font-style="italic">h</tspan><tspan x="779.7" y="280.6">2</tspan><tspan x="790.0" y="270.6" font-size="17.3">(</tspan><tspan x="797.6" y="270.3" font-style="italic">f</tspan><tspan x="805.5" y="270.6" font-size="17.3">(</tspan><tspan x="811.8" y="270.3" font-style="italic">a</tspan><tspan x="823.5" y="274.0" font-size="20.9" fill="#3c3c3c">+</tspan><tspan x="839.1" y="270.3">2</tspan><tspan x="847.5" y="270.3" font-style="italic">h</tspan><tspan x="856.2" y="270.6" font-size="17.3">)</tspan><tspan x="865.7" y="274.0" font-size="20.9" fill="#3c3c3c">+</tspan><tspan x="882.7" y="270.3" font-style="italic">f</tspan><tspan x="890.6" y="270.6" font-size="17.3">(</tspan><tspan x="896.9" y="270.3" font-style="italic">a</tspan><tspan x="908.7" y="274.0" font-size="20.9" fill="#3c3c3c">+</tspan><tspan x="924.1" y="270.3">3</tspan><tspan x="932.6" y="270.3" font-style="italic">h</tspan><tspan x="941.3" y="270.6" font-size="17.3">)</tspan><tspan x="947.4" y="270.6" font-size="17.3">)</tspan><tspan x="956.9" y="274.0" font-size="20.9" fill="#3c3c3c">+</tspan><tspan x="971.8" y="271.6">·</tspan><tspan x="979.9" y="271.6">·</tspan><tspan x="988.0" y="271.6">·</tspan><tspan x="995.2" y="274.0" font-size="20.9" fill="#3c3c3c">+</tspan><tspan x="1013.3" y="259.2" font-style="italic">h</tspan><tspan x="1013.3" y="280.6">2</tspan><tspan x="1023.6" y="270.6" font-size="17.3">(</tspan><tspan x="1031.2" y="270.3" font-style="italic">f</tspan><tspan x="1039.1" y="270.6" font-size="17.3">(</tspan><tspan x="1045.4" y="270.3" font-style="italic">a</tspan><tspan x="1057.1" y="274.0" font-size="20.9" fill="#3c3c3c">+</tspan><tspan x="1072.7" y="270.6" font-size="17.3">(</tspan><tspan x="1080.0" y="270.3" font-style="italic">m</tspan><tspan x="1096.2" y="274.0" font-size="20.9" fill="#3c3c3c">−</tspan><tspan x="1111.5" y="270.3">1</tspan><tspan x="1119.8" y="270.6" font-size="17.3">)</tspan><tspan x="1126.3" y="270.3" font-style="italic">h</tspan><tspan x="1135.0" y="270.6" font-size="17.3">)</tspan><tspan x="1144.5" y="274.0" font-size="20.9" fill="#3c3c3c">+</tspan><tspan x="1161.5" y="270.3" font-style="italic">f</tspan><tspan x="1169.5" y="270.6" font-size="17.3">(</tspan><tspan x="1174.9" y="270.3" font-style="italic">b</tspan><tspan x="1182.5" y="270.6" font-size="17.3">)</tspan><tspan x="1188.6" y="270.6" font-size="17.3">)</tspan><tspan x="760.3" y="311.7" font-size="20.9" fill="#3c3c3c">=</tspan><tspan x="777.7" y="308.0" font-style="italic">h</tspan><tspan x="798.3" y="296.9">1</tspan><tspan x="798.6" y="318.3">2</tspan><tspan x="808.3" y="308.2" font-size="17.3">(</tspan><tspan x="815.9" y="308.0" font-style="italic">f</tspan><tspan x="823.8" y="308.2" font-size="17.3">(</tspan><tspan x="830.1" y="308.0" font-style="italic">a</tspan><tspan x="838.4" y="308.2" font-size="17.3">)</tspan><tspan x="847.9" y="311.7" font-size="20.9" fill="#3c3c3c">+</tspan><tspan x="864.9" y="308.0" font-style="italic">f</tspan><tspan x="872.9" y="308.2" font-size="17.3">(</tspan><tspan x="878.3" y="308.0" font-style="italic">b</tspan><tspan x="885.9" y="308.2" font-size="17.3">)</tspan><tspan x="892.0" y="308.2" font-size="17.3">)</tspan><tspan x="787.8" y="346.9" font-size="20.9" fill="#3c3c3c">+</tspan><tspan x="801.3" y="343.2" font-style="italic">f</tspan><tspan x="809.2" y="343.4" font-size="17.3">(</tspan><tspan x="815.5" y="343.2" font-style="italic">a</tspan><tspan x="827.3" y="346.9" font-size="20.9" fill="#3c3c3c">+</tspan><tspan x="843.4" y="343.2" font-style="italic">h</tspan><tspan x="852.1" y="343.4" font-size="17.3">)</tspan><tspan x="861.6" y="346.9" font-size="20.9" fill="#3c3c3c">+</tspan><tspan x="878.6" y="343.2" font-style="italic">f</tspan><tspan x="886.5" y="343.4" font-size="17.3">(</tspan><tspan x="892.9" y="343.2" font-style="italic">a</tspan><tspan x="904.6" y="346.9" font-size="20.9" fill="#3c3c3c">+</tspan><tspan x="920.1" y="343.2">2</tspan><tspan x="928.5" y="343.2" font-style="italic">h</tspan><tspan x="937.2" y="343.4" font-size="17.3">)</tspan><tspan x="946.8" y="346.9" font-size="20.9" fill="#3c3c3c">+</tspan><tspan x="961.6" y="344.5">·</tspan><tspan x="969.7" y="344.5">·</tspan><tspan x="977.8" y="344.5">·</tspan><tspan x="985.0" y="346.9" font-size="20.9" fill="#3c3c3c">+</tspan><tspan x="1002.1" y="343.2" font-style="italic">f</tspan><tspan x="1010.0" y="343.4" font-size="17.3">(</tspan><tspan x="1016.3" y="343.2" font-style="italic">a</tspan><tspan x="1028.0" y="346.9" font-size="20.9" fill="#3c3c3c">+</tspan><tspan x="1043.6" y="343.4" font-size="17.3">(</tspan><tspan x="1050.9" y="343.2" font-style="italic">m</tspan><tspan x="1067.1" y="346.9" font-size="20.9" fill="#3c3c3c">−</tspan><tspan x="1082.4" y="343.2">1</tspan><tspan x="1090.7" y="343.4" font-size="17.3">)</tspan><tspan x="1097.2" y="343.2" font-style="italic">h</tspan><tspan x="1105.9" y="343.4" font-size="17.3">)</tspan><tspan x="711.0" y="384.0">4</tspan><tspan x="722.5" y="387.7" font-size="20.9" fill="#3c3c3c">−</tspan><tspan x="739.2" y="384.0" font-style="italic">x</tspan><tspan x="747.6" y="378.7" font-size="10.3">2</tspan></text><g fill="#1a1a1a"><rect x="779.0" y="224" width="9.0" height="1" /><rect x="930.4" y="224" width="9.0" height="1" /><rect x="779.0" y="266" width="9.0" height="1" /><rect x="1012.6" y="266" width="9.0" height="1" /><rect x="798.5" y="304" width="7.8" height="1" /><rect x="710.6" y="370" width="43.8" height="1"/></g><text transform="translate(686.4,230.4) skewX(-10) scale(.58,1)" x="0" y="0" font-size="34.6">∫</text><text transform="translate(791.4,312.4) scale(.74,1)" font-size="34" fill="#3a3a3a" text-anchor="middle" x="0" y="0">{</text><text transform="translate(1116.9,347.6) scale(.74,1)" font-size="34" fill="#3a3a3a" text-anchor="middle" x="0" y="0">}</text><text transform="translate(698.4,384.6) scale(1.15,1)" font-size="19.7" x="0" y="0">√</text></g><text x="683.7" y="146.8" font-family="IPAGothic,Noto Sans CJK JP,sans-serif" font-size="21.1" fill="#111">台形則による定積分</text></svg></div>
 <svg width="651" height="977" viewBox="629 0 651 977" style="left:0;top:0"><defs><linearGradient id="sbv" x1="0" y1="0" x2="1" y2="0"><stop offset="0" stop-color="#fdfcfb"/><stop offset=".3" stop-color="#e7e3dc"/><stop offset=".75" stop-color="#f0ede8"/><stop offset="1" stop-color="#faf9f7"/></linearGradient><linearGradient id="sbh" x1="0" y1="0" x2="0" y2="1"><stop offset="0" stop-color="#e4dfd7"/><stop offset=".5" stop-color="#efece7"/><stop offset="1" stop-color="#fbfaf8"/></linearGradient></defs><rect x="1260.5" y="86.500" width="14" height="845" rx="3" fill="url(#sbv)" stroke="#9c907d"/><rect x="1261" y="718" width="13" height="199" fill="#d9d1c5"/><path d="M1260.5 100.500 H1274.500 M1260.500 717.500 H1274.500 M1260.500 917.500 H1274.500" stroke="#9c907d"/><path d="M1264.4 95.600 L1267.500 92.400 L1270.600 95.600" fill="none" stroke="#b9ab96" stroke-width="1.3"/><path d="M1264.200 922.600 L1267.500 926 L1270.800 922.600" fill="none" stroke="#222" stroke-width="1.6"/><rect x="1264" y="405" width="7" height="1" fill="#a99b86"/><rect x="1264" y="406" width="7" height="1" fill="#fff"/><rect x="1264" y="408" width="7" height="1" fill="#a99b86"/><rect x="1264" y="409" width="7" height="1" fill="#fff"/><rect x="1264" y="411" width="7" height="1" fill="#a99b86"/><rect x="1264" y="412" width="7" height="1" fill="#fff"/><rect x="1119" y="932.500" width="127" height="13" fill="#d9d1c5"/><rect x="635.500" y="932.500" width="623.5" height="14" rx="3" fill="none" stroke="#9c907d"/><rect x="636" y="933" width="483" height="13" fill="url(#sbh)"/><rect x="1246" y="933" width="12.6" height="13" fill="url(#sbh)"/><path d="M648.500 932.500 V946.500 M1119.500 932.500 V946.500 M1245.500 932.500 V946.500" stroke="#9c907d"/><path d="M644 936.400 L640.800 939.500 L644 942.600" fill="none" stroke="#b9ab96" stroke-width="1.3"/><path d="M1250.600 936.200 L1254 939.500 L1250.600 942.800" fill="none" stroke="#222" stroke-width="1.6"/><rect x="880" y="936" width="1" height="7" fill="#a99b86"/><rect x="881" y="936" width="1" height="7" fill="#fff"/><rect x="883" y="936" width="1" height="7" fill="#a99b86"/><rect x="884" y="936" width="1" height="7" fill="#fff"/><rect x="886" y="936" width="1" height="7" fill="#a99b86"/><rect x="887" y="936" width="1" height="7" fill="#fff"/></svg>
 <div class="sep2" style="left:5px;top:947px;width:641px"></div>
 <div class="sbox" style="left:456px;width:44px">106%</div>
 <div class="sbox" style="left:506px;width:116px">1ページ中1ページ</div>
 <div class="fl"></div><div class="fr"></div><div class="fli"></div><div class="fri"></div><div class="tl"></div><div class="bb"></div>
 <div id="wm">© 2012 mk-mode.com</div>
</div>
<div id="topstrip"></div>

</body></html>
